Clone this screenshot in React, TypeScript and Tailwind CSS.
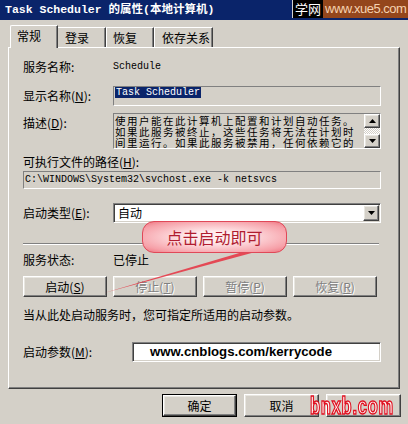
import React from "react";

function RaisedBtn({
  children,
  disabled,
  className,
}: {
  children?: React.ReactNode;
  disabled?: boolean;
  className?: string;
}) {
  return (
    <div
      className={
        "flex items-center justify-center border border-t-white border-l-white border-r-[#404040] border-b-[#404040] shadow-[inset_-1px_-1px_0_#808080,inset_1px_1px_0_#e8e6e0] bg-[#d4d0c8] " +
        (disabled ? "text-[#808080] [text-shadow:1px_1px_0_#ffffff] " : "text-black ") +
        (className ?? "")
      }
    >
      {children}
    </div>
  );
}

function Tri({ up }: { up?: boolean }) {
  return (
    <svg width="7" height="4" viewBox="0 0 7 4">
      {up ? <polygon points="0,4 7,4 3.5,0" fill="#000" /> : <polygon points="0,0 7,0 3.5,4" fill="#000" />}
    </svg>
  );
}

export default function App() {
  return (
    <div className="relative w-[408px] h-[424px] overflow-hidden bg-[#d4d0c8] font-['Noto_Sans_CJK_SC','Noto_Sans',sans-serif] text-[12px] leading-[14px] text-black flex flex-col">
      {/* Title bar */}
      <div className="h-[20px] shrink-0 bg-[#0a246a] flex items-center pl-[5px] text-white font-bold text-[11.5px] font-['Liberation_Mono','Noto_Sans_CJK_SC',monospace] whitespace-nowrap">
        Task Scheduler 的属性(本地计算机)
      </div>

      {/* Tabs */}
      <div className="h-[22px] mt-[5px] pl-[10px] flex items-end shrink-0">
        <div className="relative z-10 mb-[-1px] h-[23px] w-[48px] bg-[#d4d0c8] border-t border-l border-r border-t-white border-l-white border-r-[#404040] rounded-tl-[2px] shadow-[inset_-1px_0_0_#808080] flex items-center pl-[6px] pb-[2px]">
          常规
        </div>
        <div className="h-[20px] w-[48px] border-t border-r border-t-white border-r-[#404040] shadow-[inset_-1px_0_0_#808080] flex items-center pl-[7px]">
          登录
        </div>
        <div className="h-[20px] w-[48px] border-t border-l border-r border-t-white border-l-white border-r-[#404040] shadow-[inset_-1px_0_0_#808080] flex items-center pl-[6px]">
          恢复
        </div>
        <div className="h-[20px] w-[59px] border-t border-l border-r border-t-white border-l-white border-r-[#404040] shadow-[inset_-1px_0_0_#808080] flex items-center pl-[7px]">
          依存关系
        </div>
      </div>

      {/* Panel */}
      <div className="mx-[8px] h-[342px] shrink-0 border border-t-white border-l-white border-r-[#404040] border-b-[#404040] shadow-[inset_-1px_-1px_0_#808080] pl-[14px] flex flex-col">
        {/* Service name */}
        <div className="mt-[12px] h-[14px] flex items-center">
          <span className="w-[90px] shrink-0">服务名称:</span>
          <span className="font-['Liberation_Mono',monospace] text-[10px]">Schedule</span>
        </div>

        {/* Display name */}
        <div className="mt-[12px] h-[20px] flex items-center">
          <span className="w-[90px] shrink-0">
            显示名称(<span className="underline">N</span>):
          </span>
          <div className="w-[268px] h-[20px] border border-t-[#808080] border-l-[#808080] border-r-white border-b-white flex items-start pl-[1px]">
            <span className="bg-[#0a246a] text-white font-['Liberation_Mono',monospace] text-[10px] leading-[11px] h-[11px] px-[1px]">
              Task Scheduler
            </span>
          </div>
        </div>

        {/* Description */}
        <div className="mt-[7px] h-[36px] flex items-start">
          <span className="w-[90px] shrink-0 mt-[3px]">
            描述(<span className="underline">D</span>):
          </span>
          <div className="w-[268px] h-[36px] border border-t-[#808080] border-l-[#808080] border-r-white border-b-white flex">
            <div className="flex-1 pl-[1px] pt-[1px] text-[10.5px] leading-[11px] tracking-[1.5px] whitespace-nowrap">
              <div className="h-[11px]">使用户能在此计算机上配置和计划自动任务。</div>
              <div className="h-[11px]">如果此服务被终止，这些任务将无法在计划时</div>
              <div className="h-[11px]">间里运行。如果此服务被禁用，任何依赖它的</div>
            </div>
            <div className="w-[16px] flex flex-col">
              <RaisedBtn className="h-[14px]">
                <Tri up />
              </RaisedBtn>
              <div className="flex-1 bg-[repeating-conic-gradient(#ffffff_0_25%,#d4d0c8_0_50%)] bg-[length:2px_2px]" />
              <RaisedBtn className="h-[14px]">
                <Tri />
              </RaisedBtn>
            </div>
          </div>
        </div>

        {/* Executable path */}
        <div className="mt-[6px] h-[14px] flex items-center">
          可执行文件的路径(<span className="underline">H</span>):
        </div>
        <div className="mt-[2px] w-[358px] h-[18px] border border-t-[#808080] border-l-[#808080] border-r-white border-b-white flex items-center pl-[1px] font-['Liberation_Mono',monospace] text-[10px] whitespace-nowrap">
          C:\WINDOWS\System32\svchost.exe -k netsvcs
        </div>

        {/* Startup type */}
        <div className="mt-[14px] h-[20px] flex items-center">
          <span className="w-[90px] shrink-0">
            启动类型(<span className="underline">E</span>):
          </span>
          <div className="w-[268px] h-[20px] bg-white border border-t-[#808080] border-l-[#808080] border-r-white border-b-white shadow-[inset_1px_1px_0_#404040,inset_-1px_-1px_0_#d4d0c8] flex items-center p-[1px]">
            <span className="flex-1 pl-[3px]">自动</span>
            <RaisedBtn className="w-[16px] h-[16px]">
              <Tri />
            </RaisedBtn>
          </div>
        </div>

        {/* Separator */}
        <div className="mt-[20px] w-[356px] h-[2px] border-t border-t-[#808080] border-b border-b-white" />

        {/* Service status */}
        <div className="mt-[8px] h-[14px] flex items-center">
          <span className="w-[90px] shrink-0">服务状态:</span>
          <span>已停止</span>
        </div>

        {/* Control buttons */}
        <div className="mt-[9px] h-[21px] flex gap-[6px]">
          <RaisedBtn className="w-[84px] h-[21px]">
            启动(<span className="underline">S</span>)
          </RaisedBtn>
          <RaisedBtn disabled className="w-[84px] h-[21px]">
            停止(<span className="underline">T</span>)
          </RaisedBtn>
          <RaisedBtn disabled className="w-[84px] h-[21px]">
            暂停(<span className="underline">P</span>)
          </RaisedBtn>
          <RaisedBtn disabled className="w-[84px] h-[21px]">
            恢复(<span className="underline">R</span>)
          </RaisedBtn>
        </div>

        <div className="mt-[11px] h-[14px] flex items-center whitespace-nowrap">
          当从此处启动服务时，您可指定所适用的启动参数。
        </div>

        {/* Start params */}
        <div className="mt-[20px] h-[20px] flex items-center">
          <span className="w-[109px] shrink-0">
            启动参数(<span className="underline">M</span>):
          </span>
          <div className="w-[249px] h-[20px] bg-white border border-t-[#808080] border-l-[#808080] border-r-white border-b-white shadow-[inset_1px_1px_0_#404040,inset_-1px_-1px_0_#d4d0c8] flex items-center pl-[17px] font-['Liberation_Sans',Arial,sans-serif] font-bold text-[13.2px] whitespace-nowrap">
            www.cnblogs.com/kerrycode
          </div>
        </div>
      </div>

      {/* Bottom buttons */}
      <div className="mt-[5px] h-[23px] flex justify-end gap-[7px] pr-[7px]">
        <div className="w-[75px] h-[23px] border border-black">
          <RaisedBtn className="w-full h-full">确定</RaisedBtn>
        </div>
        <RaisedBtn className="w-[75px] h-[23px]">取消</RaisedBtn>
        <RaisedBtn disabled className="w-[75px] h-[23px]" />
      </div>

      {/* Watermark top-right */}
      <div className="absolute top-0 left-[292px] right-0 h-[18px] flex">
        <div className="w-[31px] h-full bg-black border-l border-l-[#d0d0d0] flex items-center justify-center text-white text-[13px] leading-[14px]">
          学网
        </div>
        <div className="flex-1 h-full bg-[#94461c] flex items-center pl-[2px] text-[#f6d2b0] font-['Liberation_Sans',Arial,sans-serif] text-[13px] tracking-[-0.5px] whitespace-nowrap">
          www.xue5.com
        </div>
      </div>

      {/* Arrow */}
      <svg className="absolute left-0 top-0 pointer-events-none" width="408" height="424" viewBox="0 0 408 424">
        <polygon points="246,251 259,251 104,293" fill="#e63a48" opacity="0.9" />
      </svg>

      {/* Callout bubble */}
      <div className="absolute left-[142px] top-[221px] w-[145px] h-[32px] rounded-[12px] border border-[#e04858] bg-[radial-gradient(ellipse_at_center,#ffecee_25%,#f6a0a8_80%,#ee7480_100%)] flex items-center justify-center text-[16px] leading-[18px] text-[#b01c30] whitespace-nowrap">
        点击启动即可
      </div>

      {/* bnxb watermark */}
      <div className="absolute left-[310px] top-[394px] h-[24px] flex items-center">
        <span className="inline-block origin-left scale-x-[0.72] font-['Liberation_Sans',Arial,sans-serif] font-bold text-[23px] leading-[24px] text-[#fff4f4] [-webkit-text-stroke:1.5px_#e01020] whitespace-nowrap tracking-[1px]">
          bnxb.com
        </span>
      </div>
    </div>
  );
}
